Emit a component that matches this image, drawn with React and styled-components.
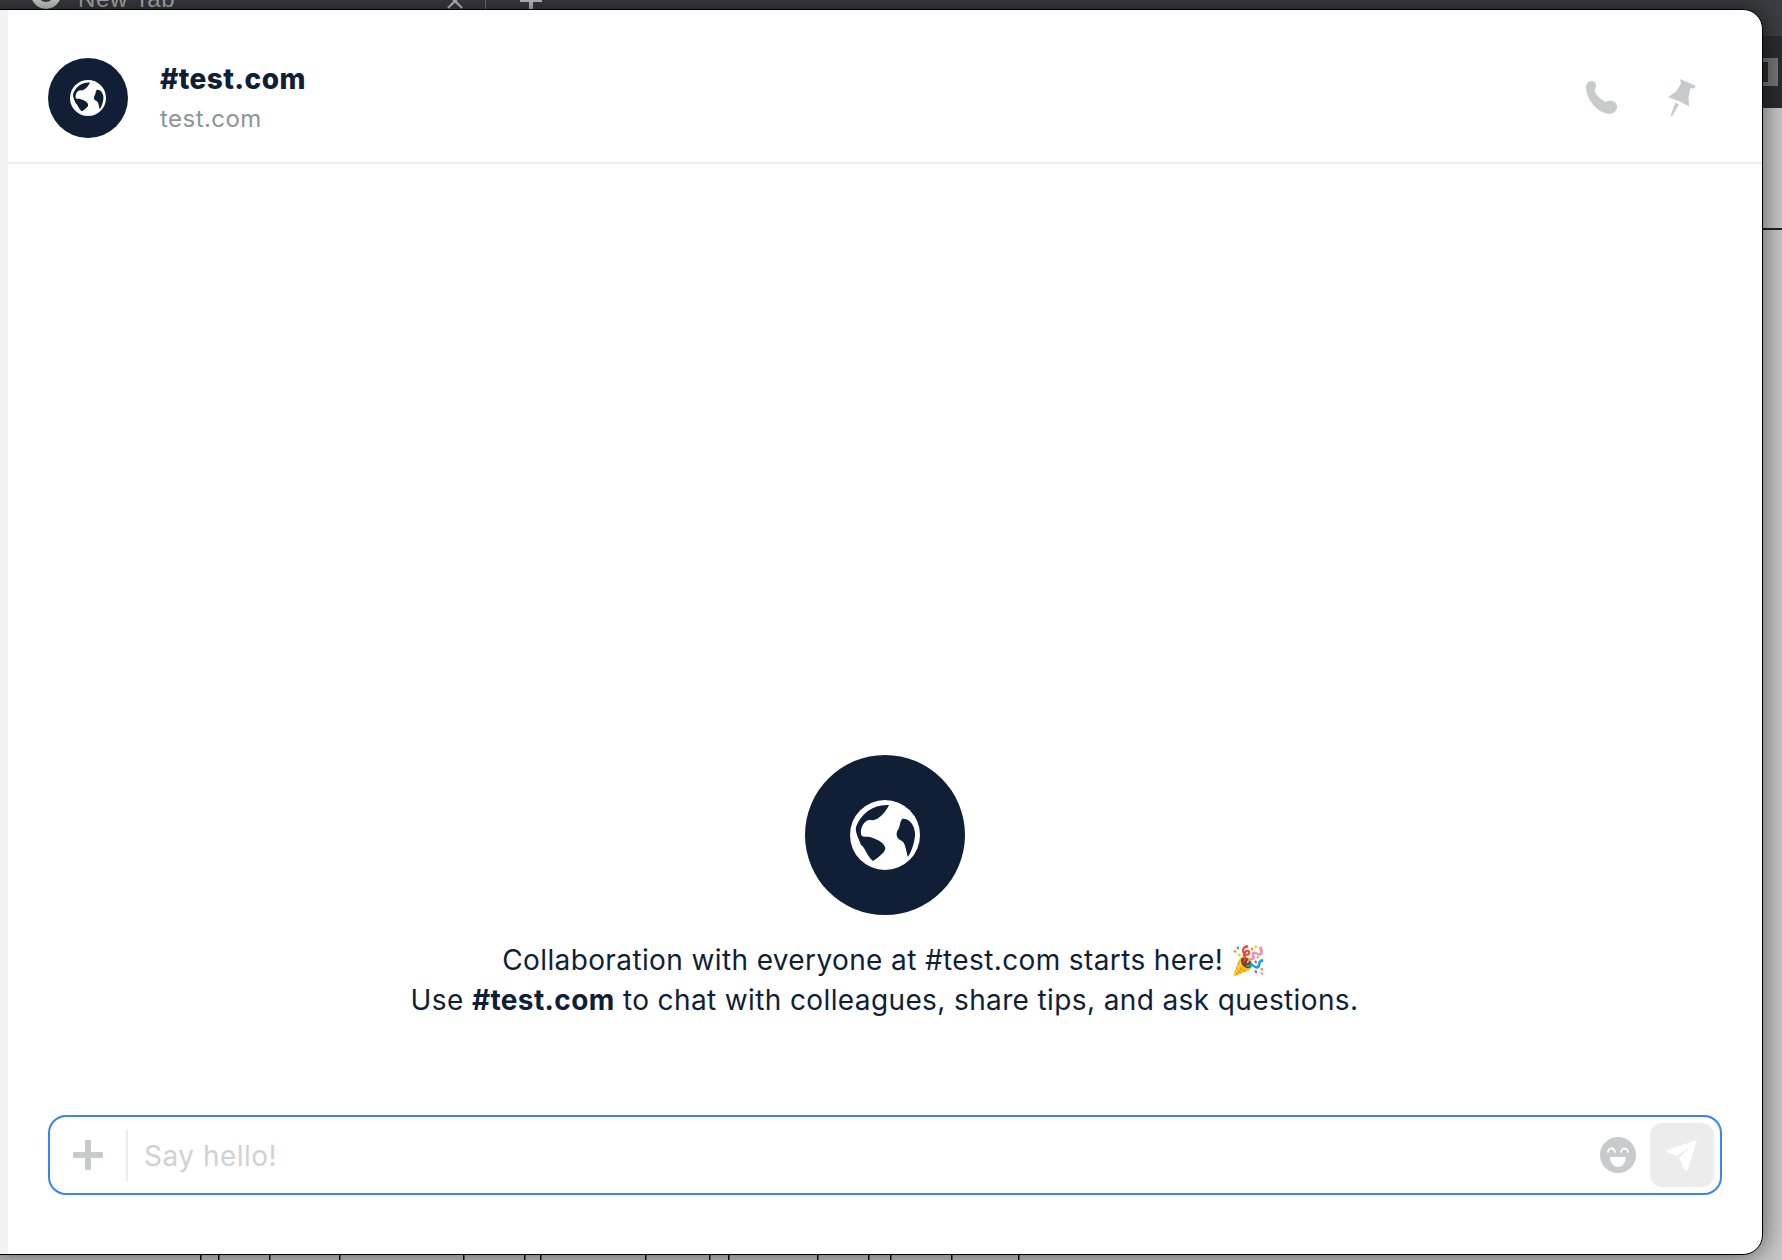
import React from "react";
import styled, { createGlobalStyle } from "styled-components";

const GlobalStyle = createGlobalStyle`
  html, body { margin: 0; padding: 0; background: #c8c8c8; }
  * { box-sizing: border-box; }
`;

const FONT = `"Inter", "Liberation Sans", sans-serif`;
const NAVY = "#101e36";
const ICON_GREY = "#c7cbcc";

const Backdrop = styled.div`
  position: relative;
  width: 1782px;
  height: 1260px;
  overflow: hidden;
  display: flex;
  flex-direction: column;
`;

const ChromeTabs = styled.div`
  height: 36px;
  flex: none;
  background: #3b3e42;
  color: #b4b6b8;
  font: 24px "Liberation Sans", sans-serif;
  display: flex;
  align-items: flex-start;
`;

const TabIcon = styled.span`
  width: 30px;
  height: 30px;
  margin: -21px 0 0 31px;
  border: 7px solid #d6d6d6;
  border-radius: 50%;
`;

const TabLabel = styled.span`
  margin: -15px 0 0 17px;
  letter-spacing: 0.6px;
`;

const TabClose = styled.span`
  display: flex;
  margin: -8px 0 0 271px;
`;

const TabDivider = styled.span`
  width: 1px;
  height: 10px;
  margin-left: 21px;
  background: #77797c;
`;

const TabPlus = styled.span`
  display: flex;
  margin: -11px 0 0 34px;
`;

const ChromeBar = styled.div`
  height: 72px;
  flex: none;
  background: #2b2c30;
  display: flex;
  align-items: center;
  justify-content: flex-end;
  padding-right: 4px;
`;

const ToolbarButton = styled.span`
  width: 16px;
  height: 28px;
  background: #777;
  display: flex;
  align-items: center;

  &::before {
    content: "";
    width: 6px;
    height: 20px;
    background: #2b2c30;
  }
`;

const PageArea = styled.div`
  flex: 1;
  display: flex;
  flex-direction: column;
  justify-content: space-between;
  padding-top: 120px;
  background: #c8c8c8;
`;

const PageRule = styled.div`
  height: 2px;
  background: #222;
`;

const PageMarks = styled.svg`
  display: block;
  width: 1782px;
  height: 6px;
`;

const Modal = styled.div`
  position: absolute;
  left: -10px;
  top: 9px;
  width: 1773px;
  height: 1246px;
  display: flex;
  flex-direction: column;
  background: #fff;
  border: 1px solid #000;
  border-radius: 0 20px 20px 0;
  box-shadow: 0 0 26px rgba(0, 0, 0, 0.6);
  padding-left: 16px;
  font-family: ${FONT};
  color: ${NAVY};

  &::before {
    content: "";
    position: absolute;
    left: 0;
    top: 0;
    bottom: 0;
    width: 17px;
    background: #f2f2f2;
  }
`;

const Header = styled.header`
  height: 154px;
  flex: none;
  display: flex;
  align-items: center;
  padding: 24px 60px 0 41px;
  border-bottom: 2px solid #ececec;
`;

const Avatar = styled.div`
  width: ${(p) => p.$size}px;
  height: ${(p) => p.$size}px;
  flex: none;
  border-radius: 50%;
  background: ${NAVY};
  display: flex;
  align-items: center;
  justify-content: center;
`;

const Titles = styled.div`
  margin: 2px 0 0 32px;
  flex: 1;
  display: flex;
  flex-direction: column;
`;

const Title = styled.div`
  font-size: 28px;
  line-height: 40px;
  font-weight: 800;
  letter-spacing: 0.4px;
`;

const Subtitle = styled.div`
  font-size: 24px;
  line-height: 40px;
  letter-spacing: 0.45px;
  color: #8a9699;
`;

const Actions = styled.div`
  display: flex;
  align-items: center;
  gap: 41px;
`;

const IconSlot = styled.span`
  width: 40px;
  height: 40px;
  display: flex;
  align-items: center;
  justify-content: center;
`;

const Body = styled.main`
  flex: 1;
  display: flex;
  flex-direction: column;
  align-items: center;
  justify-content: flex-end;
  padding-bottom: 95px;
`;

const Intro = styled.p`
  margin: 25px 0 0;
  font-size: 28px;
  line-height: 40px;
  letter-spacing: 0.38px;
  text-align: center;
  strong { font-weight: 700; }
`;

const Composer = styled.div`
  flex: none;
  height: 80px;
  margin: 0 40px 59px 41px;
  border: 2px solid #3b82f6;
  border-radius: 18px;
  display: flex;
  align-items: center;
  padding: 0 6px 0 0;
`;

const PlusSlot = styled.span`
  width: 78px;
  height: 52px;
  flex: none;
  display: flex;
  align-items: center;
  justify-content: center;
  border-right: 2px solid #ececec;
`;

const Placeholder = styled.span`
  flex: 1;
  margin: 2px 0 0 16px;
  font-size: 28px;
  letter-spacing: 0.5px;
  color: #cfd2d3;
`;

const SendButton = styled.span`
  width: 64px;
  height: 64px;
  margin-left: 14px;
  border-radius: 12px;
  background: #ececec;
  display: flex;
  align-items: center;
  justify-content: center;
`;

function GlobeIcon({ size }) {
  return (
    <svg width={size} height={size} viewBox="0 0 70 70">
      <circle cx="35" cy="35" r="35" fill="#fff" />
      <path
        fill={NAVY}
        d="M39 5 C24 4 11 13 6 27 C5 33 9 39 11 45 C15 47 16 55 23 61 C29 57 37 51 35 47 C33 41 25 39 20 37 C15 36 12 38 11 34 C10 27 15 19 21 20 C27 22 36 12 39 5 Z"
      />
      <path
        fill={NAVY}
        d="M52 19 C60 17 66 28 65 36 C64 45 61 52 58 57 C56 52 56 44 52 41 C46 39 45 33 49 28 C50 25 50 22 52 19 Z"
      />
    </svg>
  );
}

function PhoneIcon() {
  return (
    <svg width="33" height="34" viewBox="0 0 33 34">
      <path
        fill={ICON_GREY}
        d="M1 6 C1 2 4 0 7 0 C10 0 11.5 3 11 6 C10.5 8 9.5 9 9.5 10 C11 14 16 19 21 21 C23 20 24 19.5 27 20 C30.5 20.5 32 23 32 26 C32 30 28 33 24 33 C13 32 1 19 1 6 Z"
      />
    </svg>
  );
}

function PinIcon() {
  return (
    <svg width="28" height="38" viewBox="0 0 28 38">
      <path fill={ICON_GREY} d="M12 0 L27.7 6.7 L26 9.5 L22.5 9 L20.5 18 L21 27.5 L13 23 L0 18 L8 12.5 L13 4.5 Z" />
      <path fill={ICON_GREY} d="M7.5 23.5 L11 25.5 L4 37.5 L2.5 36.8 Z" />
    </svg>
  );
}

function PlusIcon() {
  return (
    <svg width="30" height="30" viewBox="0 0 30 30">
      <path fill={ICON_GREY} d="M13 0 h4 a1 1 0 0 1 1 1 v11 h11 a1 1 0 0 1 1 1 v4 a1 1 0 0 1 -1 1 h-11 v11 a1 1 0 0 1 -1 1 h-4 a1 1 0 0 1 -1 -1 v-11 h-11 a1 1 0 0 1 -1 -1 v-4 a1 1 0 0 1 1 -1 h11 v-11 a1 1 0 0 1 1 -1 z" />
    </svg>
  );
}

function SmileIcon() {
  return (
    <svg width="36" height="36" viewBox="0 0 36 36">
      <circle cx="18" cy="18" r="18" fill={ICON_GREY} />
      <path d="M8 15 a3.5 3.5 0 0 1 7 0" fill="none" stroke="#fff" strokeWidth="1.8" strokeLinecap="round" />
      <path d="M21 15 a3.5 3.5 0 0 1 7 0" fill="none" stroke="#fff" strokeWidth="1.8" strokeLinecap="round" />
      <path d="M10 20 H26 C26 26 22 30 18 30 C14 30 10 26 10 20 Z" fill="#fff" />
    </svg>
  );
}

function SendIcon() {
  return (
    <svg width="32" height="32" viewBox="0 0 32 32">
      <path fill="#fff" d="M31 1 L22 30 C21 32 19 32 18 30 L13 19 L24 8 L11 17 L1 13 C0 12 0 11 1 11 Z" />
    </svg>
  );
}

function CloseGlyph() {
  return (
    <svg width="18" height="18" viewBox="0 0 18 18">
      <path d="M2 2 L16 16 M16 2 L2 16" stroke="#c4c6c8" strokeWidth="2.4" fill="none" />
    </svg>
  );
}

function PlusGlyph() {
  return (
    <svg width="22" height="22" viewBox="0 0 22 22">
      <path d="M11 0 V22 M0 11 H22" stroke="#c4c6c8" strokeWidth="4" fill="none" />
    </svg>
  );
}

// tops of whatever the page behind the modal shows through at the bottom edge
const MARK_X = [200, 218, 269, 339, 463, 524, 540, 645, 709, 728, 817, 868, 890, 951, 1018];

export default function App() {
  return (
    <>
      <GlobalStyle />
      <Backdrop>
        <ChromeTabs>
          <TabIcon />
          <TabLabel>New Tab</TabLabel>
          <TabClose><CloseGlyph /></TabClose>
          <TabDivider />
          <TabPlus><PlusGlyph /></TabPlus>
        </ChromeTabs>
        <ChromeBar>
          <ToolbarButton />
        </ChromeBar>
        <PageArea>
          <PageRule />
          <PageMarks viewBox="0 0 1782 6">
            {MARK_X.map((x) => (
              <rect key={x} x={x} y="0" width="1.5" height="6" fill="#111" />
            ))}
          </PageMarks>
        </PageArea>
        <Modal>
          <Header>
            <Avatar $size={80}>
              <GlobeIcon size={36} />
            </Avatar>
            <Titles>
              <Title>#test.com</Title>
              <Subtitle>test.com</Subtitle>
            </Titles>
            <Actions>
              <IconSlot><PhoneIcon /></IconSlot>
              <IconSlot><PinIcon /></IconSlot>
            </Actions>
          </Header>
          <Body>
            <Avatar $size={160}>
              <GlobeIcon size={70} />
            </Avatar>
            <Intro>
              Collaboration with everyone at #test.com starts here! 🎉
              <br />
              Use <strong>#test.com</strong> to chat with colleagues, share tips, and ask questions.
            </Intro>
          </Body>
          <Composer>
            <PlusSlot><PlusIcon /></PlusSlot>
            <Placeholder>Say hello!</Placeholder>
            <SmileIcon />
            <SendButton><SendIcon /></SendButton>
          </Composer>
        </Modal>
      </Backdrop>
    </>
  );
}
